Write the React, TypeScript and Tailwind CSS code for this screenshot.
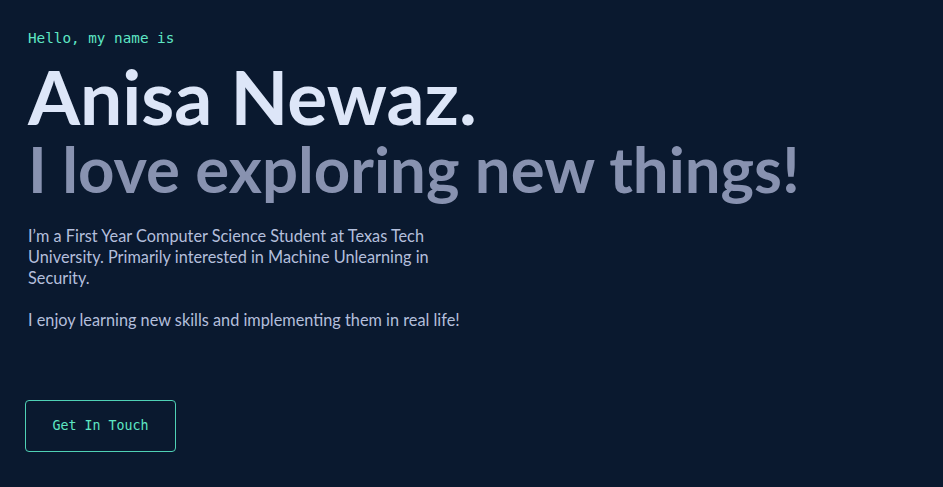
export default function App() {
  return (
    <div className="min-h-screen w-full bg-[#0a192f] px-[25px] pt-[28px] font-['Lato',sans-serif]">
      <div className="pl-[3px]">
        <p className="font-['DejaVu_Sans_Mono',monospace] text-[14.3px] leading-5 text-[#5ee6c4]">
          Hello, my name is
        </p>
        <h1 className="mt-[8px] text-[75px] font-bold leading-[80px] text-[#dde6f8]">Anisa Newaz.</h1>
        <h2 className="text-[63.5px] font-bold leading-[66px] text-[#8892b0]">I love exploring new things!</h2>
        <div className="mt-[23px] max-w-[440px] text-[16.3px] leading-[21px] text-[#b4bfdc]">
          <p>I’m a First Year Computer Science Student at Texas Tech University. Primarily interested in Machine Unlearning in Security.</p>
          <p className="mt-[21px] whitespace-nowrap">I enjoy learning new skills and implementing them in real life!</p>
        </div>
      </div>
      <button className="mt-[70px] h-[52px] w-[151px] rounded-[4px] border border-[#4fd1b5] font-['DejaVu_Sans_Mono',monospace] text-[13.3px] text-[#5ee6c4]">
        Get In Touch
      </button>
    </div>
  );
}
